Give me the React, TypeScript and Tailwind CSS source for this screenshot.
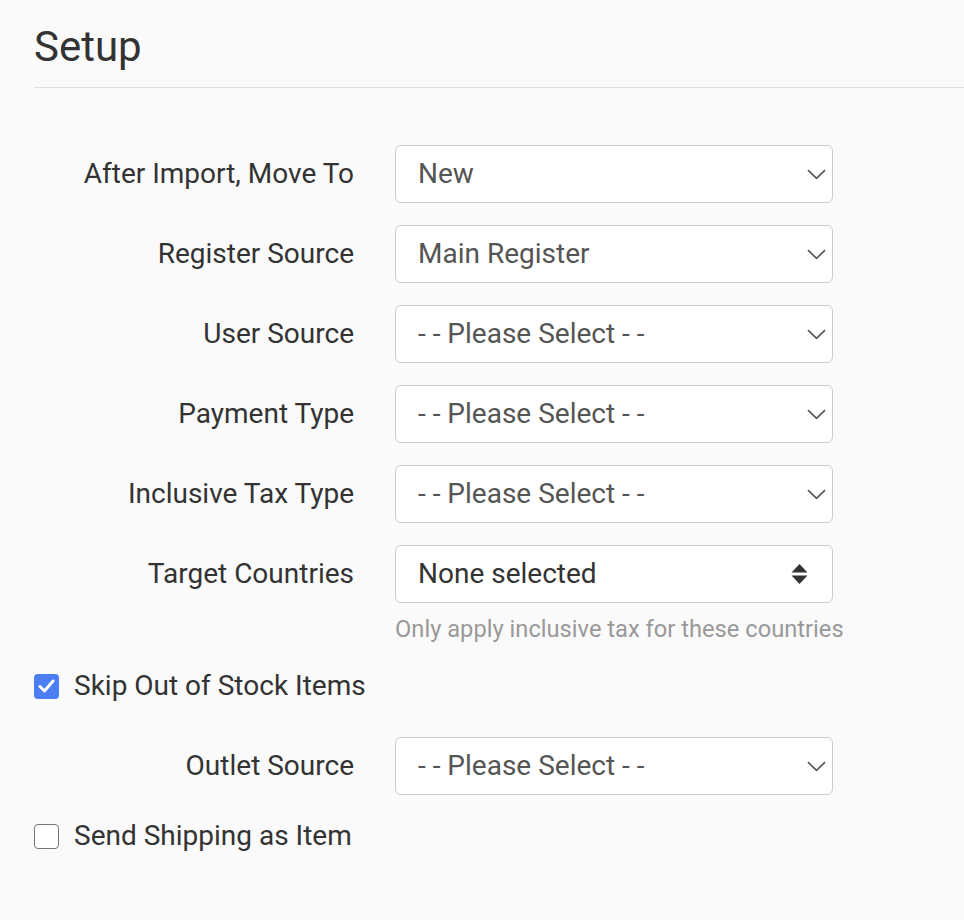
import { useState } from "react";

type Row = { label: string; value: string; kind?: "multi" };

const rows: Row[] = [
    { label: "After Import, Move To", value: "New" },
    { label: "Register Source", value: "Main Register" },
    { label: "User Source", value: "- - Please Select - -" },
    { label: "Payment Type", value: "- - Please Select - -" },
    { label: "Inclusive Tax Type", value: "- - Please Select - -" },
];

function Chevron() {
    return (
        <svg width="19" height="11" viewBox="0 0 19 11" className="shrink-0">
            <path d="M1 1.2 L9.5 9.4 L18 1.2" fill="none" stroke="#555" strokeWidth="1.6" />
        </svg>
    );
}

function UpDown() {
    return (
        <svg width="17" height="22" viewBox="0 0 17 22" className="shrink-0">
            <path d="M0.5 9.5 L8.5 1 L16.5 9.5 Z" fill="#333" />
            <path d="M0.5 12.5 L8.5 21 L16.5 12.5 Z" fill="#333" />
        </svg>
    );
}

function SelectBox({ value, kind }: { value: string; kind?: "multi" }) {
    return (
        <div
            className={`flex h-[58px] w-[438px] items-center justify-between rounded-[6px] border border-[#cccccc] bg-white pl-[22px] ${
                kind === "multi" ? "pr-[24px]" : "pr-[6px]"
            }`}
        >
            <span className={`text-[28px] ${kind === "multi" ? "text-[#333]" : "text-[#555]"}`}>{value}</span>
            {kind === "multi" ? <UpDown /> : <Chevron />}
        </div>
    );
}

function FieldRow({ label, value, kind }: Row) {
    return (
        <div className="flex items-center gap-[41px]">
            <div className="w-[320px] text-right text-[28px] text-[#333]">{label}</div>
            <SelectBox value={value} kind={kind} />
        </div>
    );
}

function Check({ checked, onToggle, label }: { checked: boolean; onToggle: () => void; label: string }) {
    return (
        <label className="flex h-[40px] cursor-pointer items-center gap-[15px]" onClick={onToggle}>
            {checked ? (
                <span className="flex h-[25px] w-[25px] items-center justify-center rounded-[4px] bg-[#4a7ef2]">
                    <svg width="17" height="14" viewBox="0 0 17 14">
                        <path d="M2 7.5 L6.5 12 L15 2" fill="none" stroke="white" strokeWidth="3" strokeLinecap="round" strokeLinejoin="round" />
                    </svg>
                </span>
            ) : (
                <span className="h-[25px] w-[25px] rounded-[4px] border-[1.5px] border-[#767676] bg-white" />
            )}
            <span className="text-[28px] text-[#333]">{label}</span>
        </label>
    );
}

export default function App() {
    const [skipStock, setSkipStock] = useState(true);
    const [sendShipping, setSendShipping] = useState(false);

    return (
        <div className="min-h-[920px] w-full bg-[#fafafa] pl-[34px] font-['Roboto','Liberation_Sans',sans-serif]">
            <div className="border-b border-[#e0e0e0] pb-[16px] pt-[23px]">
                <h1 className="text-[42px] leading-[48px] text-[#333]">Setup</h1>
            </div>

            <div className="mt-[57px] flex flex-col gap-[22px]">
                {rows.map((r) => (
                    <FieldRow key={r.label} {...r} />
                ))}
                <FieldRow label="Target Countries" value="None selected" kind="multi" />
            </div>
            <p className="ml-[361px] mt-[10px] text-[23.7px] leading-[32px] text-[#999]">
                Only apply inclusive tax for these countries
            </p>

            <div className="mt-[21px]">
                <Check checked={skipStock} onToggle={() => setSkipStock(!skipStock)} label="Skip Out of Stock Items" />
            </div>

            <div className="mt-[31px]">
                <FieldRow label="Outlet Source" value="- - Please Select - -" />
            </div>

            <div className="mt-[21px]">
                <Check checked={sendShipping} onToggle={() => setSendShipping(!sendShipping)} label="Send Shipping as Item" />
            </div>
        </div>
    );
}
